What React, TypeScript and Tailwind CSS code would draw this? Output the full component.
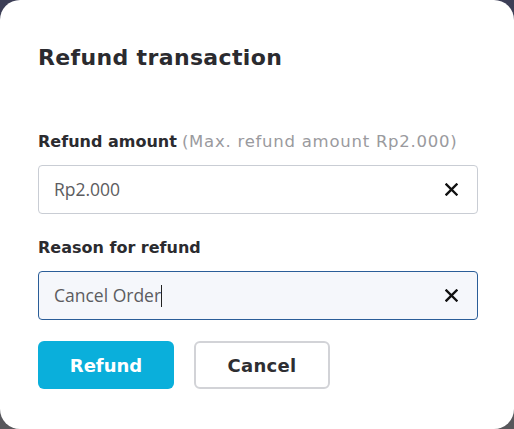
import React from "react";

const XIcon = () => (
  <svg width="13" height="13" viewBox="0 0 13 13" fill="none">
    <path d="M1.5 1.5 L11.5 11.5 M11.5 1.5 L1.5 11.5" stroke="#111" strokeWidth="2.4" strokeLinecap="square" />
  </svg>
);

export default function App() {
  return (
    <div className="w-[514px] h-[429px] bg-gradient-to-b from-[#3c3e56] to-[#58585c] overflow-hidden">
      <div className="w-[514px] h-[429px] bg-white rounded-[20px] pl-[38px] pr-[36px] pt-[43px] font-['DejaVu_Sans',sans-serif]">
        <h1 className="text-[22px] leading-[30px] font-bold text-[#2b2b2f] tracking-[0.35px]">Refund transaction</h1>
        <div className="mt-[58px] text-[16px] leading-[22px]">
          <span className="font-bold text-[#2b2b2f]">Refund amount</span>{" "}
          <span className="text-[#9a9a9e] text-[16.5px] tracking-[0.75px]">(Max. refund amount Rp2.000)</span>
        </div>
        <div className="mt-[12px] h-[49px] border border-[#c9cdd4] rounded-[4px] flex items-center justify-between pl-[15px] pr-[19px]">
          <span className="font-['Open_Sans',sans-serif] text-[17.5px] text-[#5c5c60]">Rp2.000</span>
          <XIcon />
        </div>
        <div className="mt-[23px] text-[16px] leading-[22px] font-bold text-[#2b2b2f]">Reason for refund</div>
        <div className="mt-[12px] h-[49px] border border-[#2a5d98] bg-[#f5f7fb] rounded-[4px] flex items-center justify-between pl-[15px] pr-[19px]">
          <span className="font-['Open_Sans',sans-serif] text-[17.5px] text-[#5c5c60] flex items-center">
            Cancel Order<span className="inline-block w-[1px] h-[22px] bg-[#222]"></span>
          </span>
          <XIcon />
        </div>
        <div className="mt-[21px] flex gap-[20px]">
          <button className="w-[136px] h-[48px] rounded-[6px] bg-[#0aafdb] text-white text-[18px] font-bold">Refund</button>
          <button className="w-[136px] h-[48px] rounded-[6px] border-2 border-[#d2d3d7] bg-white text-[#2e2e32] text-[18px] font-bold tracking-[0.3px]">Cancel</button>
        </div>
      </div>
    </div>
  );
}
